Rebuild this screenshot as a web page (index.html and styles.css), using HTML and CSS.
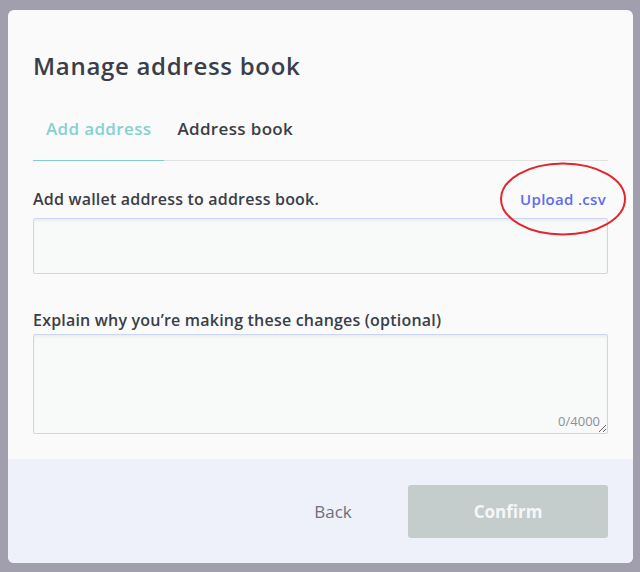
FILE: index.html
```html
<!DOCTYPE html>
<html lang="en">
<head>
<meta charset="utf-8">
<title>Manage address book</title>
<link rel="stylesheet" href="styles.css">
</head>
<body>
<div class="modal">
  <div class="content">
    <h1 class="title">Manage address book</h1>
    <div class="tabs">
      <div class="tab tab-active">Add address</div>
      <div class="tab">Address book</div>
    </div>
    <div class="field-head">
      <label class="label">Add wallet address to address book.</label>
      <a class="upload">Upload .csv
        <svg class="circle" width="128" height="76" viewBox="0 0 128 76"><ellipse cx="64" cy="38" rx="62" ry="35.5" fill="none" stroke="#e3262b" stroke-width="2"/></svg>
      </a>
    </div>
    <div class="input"></div>
    <label class="label label-2">Explain why you’re making these changes (optional)</label>
    <div class="area-wrap">
      <textarea class="area"></textarea>
      <span class="counter">0/4000</span>
    </div>
  </div>
  <div class="footer">
    <button class="btn-back">Back</button>
    <button class="btn-confirm">Confirm</button>
  </div>
</div>
</body>
</html>
```
FILE: styles.css
```css
html, body {
  margin: 0;
  padding: 0;
}
body {
  background: #a19fae;
  height: 572px;
  overflow: hidden;
  font-family: "Open Sans", "Noto Sans", sans-serif;
  color: #3b3e48;
}
.modal {
  margin: 10px 7px 0 8px;
  width: 625px;
  height: 553px;
  background: #fafafa;
  border-radius: 6px;
  overflow: hidden;
  display: flex;
  flex-direction: column;
}
.content {
  padding: 40px 25px 0 25px;
  flex: 1;
}
.title {
  margin: 0;
  font-size: 24px;
  line-height: 32px;
  font-weight: 600;
  letter-spacing: 0.7px;
  color: #3b3e48;
}
.tabs {
  margin-top: 35px;
  display: flex;
  border-bottom: 1px solid #e2e2e4;
}
.tab {
  padding: 0 13px 19px 13px;
  font-size: 17px;
  line-height: 24px;
  font-weight: 600;
  letter-spacing: 0.35px;
  color: #3b3e48;
  margin-bottom: -1px;
}
.tab-active {
  color: #86d1d1;
  border-bottom: 1px solid #86cccc;
}
.field-head {
  margin-top: 27px;
  display: flex;
  justify-content: space-between;
  align-items: baseline;
}
.label {
  display: block;
  font-size: 16px;
  line-height: 22px;
  font-weight: 600;
  letter-spacing: 0.2px;
  color: #3b3e48;
}
.upload {
  position: relative;
  font-size: 15px;
  line-height: 22px;
  font-weight: 600;
  color: #5c6cf0;
  margin-right: 2px;
  letter-spacing: 0.3px;
}
.circle {
  position: absolute;
  left: -21px;
  top: -27px;
}
.input {
  margin-top: 8px;
  height: 54px;
  border: 1px solid #ccd6f2;
  border-radius: 2px;
  background: #f8f9f9;
  box-shadow: inset 0 2px 3px rgba(0, 0, 0, 0.05);
}
.label-2 {
  margin-top: 35px;
}
.area-wrap {
  position: relative;
  margin-top: 3px;
  height: 100px;
}
.area {
  display: block;
  box-sizing: border-box;
  width: 100%;
  height: 100px;
  margin: 0;
  border: 1px solid #ccd6f2;
  border-radius: 2px;
  background: #f8f9f9;
  box-shadow: inset 0 2px 3px rgba(0, 0, 0, 0.05);
  resize: both;
  outline: none;
}
.counter {
  position: absolute;
  right: 8px;
  bottom: 4px;
  font-size: 13px;
  color: #8c9097;
}
.footer {
  height: 104px;
  background: #eef1fa;
  display: flex;
  justify-content: flex-end;
  align-items: flex-start;
  padding: 26px 25px 0 0;
  box-sizing: border-box;
  gap: 25px;
}
.btn-back {
  width: 100px;
  height: 53px;
  border: none;
  background: transparent;
  font-family: inherit;
  font-size: 17px;
  color: #6c707a;
  padding: 0;
}
.btn-confirm {
  width: 200px;
  height: 53px;
  border: none;
  border-radius: 3px;
  background: #c4cdcc;
  font-family: inherit;
  font-size: 17px;
  font-weight: 700;
  color: #f5f7f7;
  padding: 0;
}
```
